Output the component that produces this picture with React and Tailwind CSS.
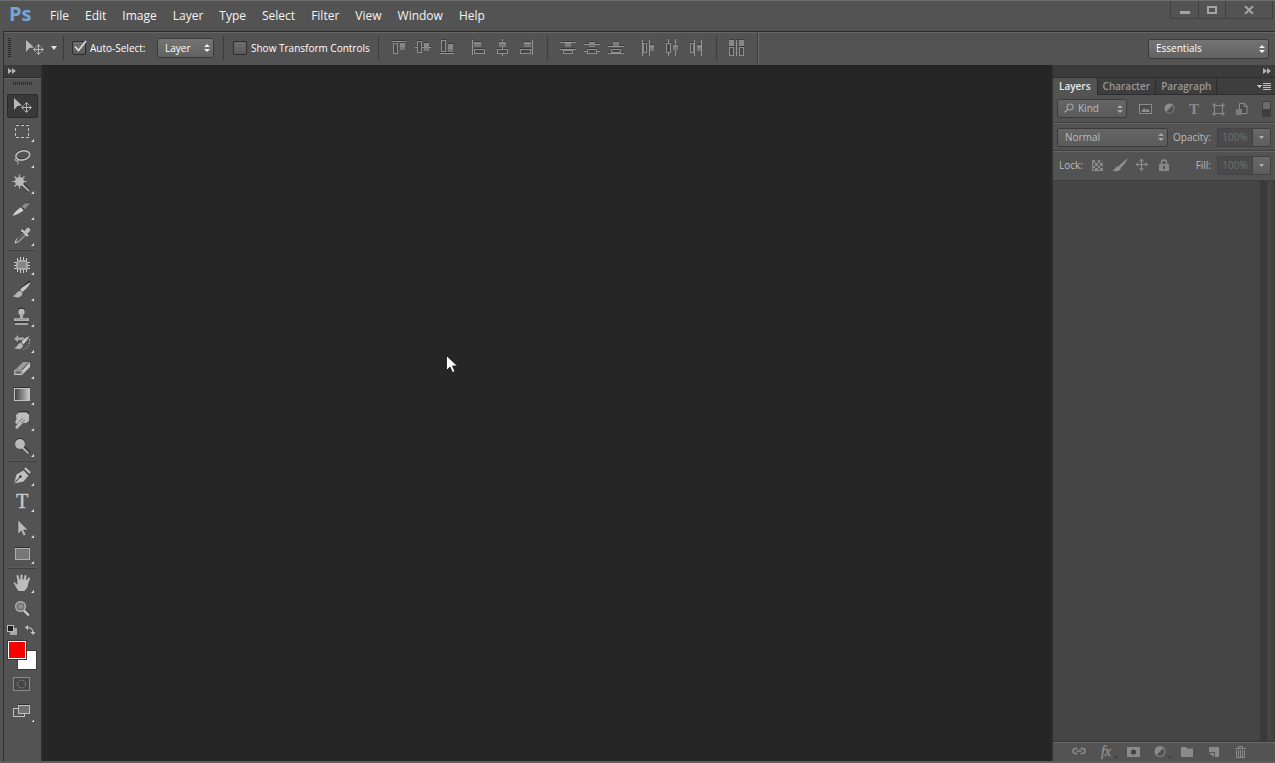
import React, { useState } from 'react';

const menuItems = ['File', 'Edit', 'Image', 'Layer', 'Type', 'Select', 'Filter', 'View', 'Window', 'Help'];

// Align / distribute glyphs on a 24px grid: bars, solid boxes and outlined boxes as [x, y, w, h]
const alignGroups = [
    [
        { name: 'Align top edges', bars: [[5, 5, 14, 1]], solid: [13, 7, 5, 7], outline: [6, 7, 5, 11] },
        { name: 'Align vertical centers', bars: [[4, 11, 16, 1]], solid: [13, 7, 5, 8], outline: [6, 5, 5, 12] },
        { name: 'Align bottom edges', bars: [[5, 17, 14, 1]], solid: [13, 8, 5, 8], outline: [6, 4, 5, 12] },
    ],
    [
        { name: 'Align left edges', bars: [[5, 4, 1, 15]], solid: [7, 6, 7, 5], outline: [7, 13, 11, 5] },
        { name: 'Align horizontal centers', bars: [[11, 3, 1, 17]], solid: [8, 6, 7, 5], outline: [6, 13, 11, 5] },
        { name: 'Align right edges', bars: [[17, 4, 1, 15]], solid: [9, 6, 7, 5], outline: [5, 13, 11, 5] },
    ],
];

const distributeGroups = [
    [
        { name: 'Distribute top edges', bars: [[4, 6, 16, 1], [4, 13, 16, 1]], solid: [9, 7, 6, 4], outline: [7, 14, 10, 4] },
        { name: 'Distribute vertical centers', bars: [[4, 8, 16, 1], [4, 15, 16, 1]], solid: [9, 6, 6, 5], outline: [7, 13, 10, 5] },
        { name: 'Distribute bottom edges', bars: [[4, 10, 16, 1], [4, 17, 16, 1]], solid: [9, 6, 6, 4], outline: [7, 13, 10, 4] },
    ],
    [
        { name: 'Distribute left edges', bars: [[6, 4, 1, 16], [13, 4, 1, 16]], solid: [14, 9, 4, 6], outline: [7, 7, 4, 10] },
        { name: 'Distribute horizontal centers', bars: [[8, 3, 1, 17], [15, 3, 1, 17]], solid: [13, 9, 5, 5], outline: [6, 7, 5, 10] },
        { name: 'Distribute right edges', bars: [[10, 4, 1, 16], [17, 4, 1, 16]], solid: [13, 9, 4, 6], outline: [6, 7, 4, 10] },
    ],
];

function AlignIcon({ item }) {
    const [sx, sy, sw, sh] = item.solid;
    const [ox, oy, ow, oh] = item.outline;
    return (
        <svg className="w-6 h-6" viewBox="0 0 24 24" shapeRendering="crispEdges">
            <rect x={sx} y={sy - 1} width={sw} height="1" fill="#3a3a3a" />
            <rect x={ox} y={oy - 1} width={ow} height="1" fill="#3a3a3a" />
            {item.bars.map(([x, y, w, h], i) => (
                <g key={i}>
                    <rect x={x} y={y - 1} width={w} height={1} fill="#3a3a3a" />
                    <rect x={x} y={y} width={w} height={h} fill="#959595" />
                </g>
            ))}
            <rect x={sx} y={sy} width={sw} height={sh} fill="#888888" />
            <rect x={sx} y={sy + sh - 3} width={sw} height="3" fill="#777777" />
            <rect x={ox + 0.5} y={oy + 0.5} width={ow - 1} height={oh - 1} fill="#484848" stroke="#8c8c8c" />
        </svg>
    );
}

function AlignGroup({ items }) {
    return (
        <div className="flex">
            {items.map((item) => (
                <button key={item.name} aria-label={item.name} className="w-6 h-6">
                    <AlignIcon item={item} />
                </button>
            ))}
        </div>
    );
}

const moveGlyph = (
    <>
        <path d="M7 5v12l3.400-4 4.600-.6z" fill="#b8b8b8" />
        <path d="M19.500 10v9M15 14.500h9" stroke="#b8b8b8" fill="none" />
        <path d="M17.500 11.800l2-2.300 2 2.300M17.500 17.200l2 2.300 2-2.300M16.800 12.500l-2.300 2 2.300 2M22.200 12.500l2.300 2-2.300 2" stroke="#b8b8b8" fill="none" />
    </>
);

const toolGroups = [
    [
        { name: 'Move', glyph: moveGlyph, noFlyout: true },
        {
            name: 'Rectangular Marquee',
            glyph: (
                <g shapeRendering="crispEdges" fill="none" strokeDasharray="3 2">
                    <path d="M8 5.500h14" stroke="#3a3a3a" />
                    <rect x="8.500" y="6.500" width="13" height="12" stroke="#c4c4c4" />
                </g>
            ),
        },
        {
            name: 'Lasso',
            glyph: (
                <g fill="none">
                    <ellipse cx="15.800" cy="9.400" rx="7" ry="4.500" stroke="#303030" transform="rotate(-12 15.800 9.400)" />
                    <ellipse cx="15.800" cy="10.400" rx="7" ry="4.500" stroke="#c4c4c4" strokeWidth="1.400" transform="rotate(-12 15.800 10.400)" />
                    <path d="M10 13c-2.500 .5-2.500 3 0 3s2-2.500 .3-2M10 16c1 1 1.500 2 .5 3.500" stroke="#c4c4c4" />
                </g>
            ),
        },
        {
            name: 'Magic Wand',
            glyph: (
                <>
                    <path d="M14 12l8 8" stroke="#303030" strokeWidth="4" />
                    <path d="M14 12.500l8 7.500" stroke="#a8a8a8" strokeWidth="2.200" />
                    <path d="M12.500 3.500v14M5.500 10.500h14M7.500 5.500l10 10M17.500 5.500l-10 10" stroke="#b8b8b8" strokeWidth="1.200" />
                    <circle cx="12.500" cy="10.500" r="4.500" fill="#b8b8b8" />
                </>
            ),
        },
        {
            name: 'Slice',
            glyph: (
                <>
                    <path d="M5.500 19c2-4 5-6.500 8.500-9l2.500 3.500c-3 2-6 4-11 5.500z" fill="#cfcfcf" />
                    <path d="M14 9.500l4-3.500h6l-6.500 7z" fill="#8a8a8a" stroke="#303030" strokeWidth=".5" />
                    <path d="M14 9.500l3.500 3.500" stroke="#2b2b2b" />
                </>
            ),
        },
        {
            name: 'Eyedropper',
            glyph: (
                <>
                    <path d="M8 20l1.500-4 7-7 2.500 2.500-7 7z" fill="#5a5a5a" stroke="#cccccc" />
                    <path d="M14.500 7l6.500 6" stroke="#d0d0d0" strokeWidth="2" />
                    <path d="M16.500 9.500l3-4q2.500-1.500 3.500.5t-1 3l-3.500 3z" fill="#bdbdbd" />
                    <path d="M10 15.500l6-6.500" stroke="#2b2b2b" />
                </>
            ),
        },
    ],
    [
        {
            name: 'Spot Healing Brush',
            glyph: (
                <>
                    <path d="M10.500 6v3M13.500 5v3M16.500 5v3M19.500 6v3M10.500 17v3M13.500 18v3M16.500 18v3M19.500 17v3M7 10.500h3M7 13.500h3M7 16h3M20 10.500h3M20 13.500h3M20 16h3" stroke="#cccccc" shapeRendering="crispEdges" />
                    <rect x="9" y="8" width="12" height="10" rx="4" fill="#a8a8a8" />
                    <rect x="11" y="10" width="8" height="6" fill="#868686" />
                </>
            ),
        },
        {
            name: 'Brush',
            glyph: (
                <>
                    <path d="M23.500 3.500l-9.500 8" stroke="#303030" strokeWidth="3" />
                    <path d="M24 4c-3 5-6 8-8.500 10l-2.500-2.500C16 8.500 20 6 24 4z" fill="#c8c8c8" />
                    <path d="M13 13c1.500 0 3 2 2 4-1.500 3-6 3-9.500 1 3.500 0 3.500-4.500 7.500-5z" fill="#b5b5b5" />
                </>
            ),
        },
        {
            name: 'Clone Stamp',
            glyph: (
                <>
                    <circle cx="14.500" cy="7" r="3.500" fill="#303030" />
                    <circle cx="14.500" cy="8" r="3.200" fill="#bcbcbc" />
                    <path d="M13 9h3v5h6v3H7v-3h6z" fill="#b0b0b0" />
                    <path d="M8 15h13" stroke="#8c8c8c" />
                    <path d="M7 18h15" stroke="#303030" />
                    <path d="M8 20h13" stroke="#c0c0c0" strokeWidth="1.500" />
                </>
            ),
        },
        {
            name: 'History Brush',
            glyph: (
                <>
                    <path d="M7 9l4-4v2.500h6V10h-6v2z" fill="#a8a8a8" />
                    <path d="M23 5.500c-2 4-4 7-6.500 9L14 12c2-3 5-5 9-6.500z" fill="#c8c8c8" stroke="#303030" strokeWidth=".5" />
                    <path d="M13.500 13c2 0 3 2 2 4-1.500 2.500-5 2.500-8.500 1 3 0 3-4 6.500-5z" fill="#b5b5b5" />
                    <path d="M22.500 9q.5 8-6 10.500" stroke="#c8c8c8" strokeDasharray="1.500 1.500" fill="none" />
                </>
            ),
        },
        {
            name: 'Eraser',
            glyph: (
                <>
                    <path d="M16 5.500h7l-8 8H8z" fill="#9c9c9c" stroke="#303030" strokeWidth=".6" />
                    <path d="M8 14h7v4.500H7.500z" fill="#707070" stroke="#c8c8c8" />
                    <path d="M15.500 14l7.500-8v5l-7.500 7.500z" fill="#c6c6c6" />
                </>
            ),
        },
        {
            name: 'Gradient',
            glyph: (
                <g shapeRendering="crispEdges">
                    <defs>
                        <linearGradient id="toolGradient">
                            <stop offset="0" stopColor="#3c3c3c" />
                            <stop offset="1" stopColor="#cccccc" />
                        </linearGradient>
                    </defs>
                    <rect x="7" y="5" width="16" height="1" fill="#303030" />
                    <rect x="7.500" y="6.500" width="15" height="12" fill="url(#toolGradient)" stroke="#c0c0c0" />
                </g>
            ),
        },
        {
            name: 'Smudge',
            glyph: (
                <>
                    <path d="M11 4l4-.5h6.500v3" fill="none" stroke="#303030" />
                    <path d="M9 7l3-2.500h7l3 2v6L19.500 15h-3.500l-6 6-2-1.500 3.500-5-2 1.500-1.500-1.500 1.500-3z" fill="#bcbcbc" />
                    <path d="M11.500 14l4.500-4M14 15l4-3" stroke="#707070" />
                </>
            ),
        },
        {
            name: 'Dodge',
            glyph: (
                <>
                    <path d="M16 13l6 6.500" stroke="#303030" strokeWidth="3.500" />
                    <path d="M15.500 13.500l6 6" stroke="#b0b0b0" strokeWidth="2" />
                    <circle cx="13" cy="9" r="5" fill="#303030" />
                    <circle cx="13" cy="10" r="5" fill="#b8b8b8" />
                </>
            ),
        },
    ],
    [
        {
            name: 'Pen',
            glyph: (
                <>
                    <path d="M7 20.500l2.500-9 7-4 5 5-5 6z" fill="#c0c0c0" />
                    <path d="M7.500 20l5.500-6" stroke="#303030" />
                    <circle cx="13.500" cy="13.500" r="1.200" fill="#303030" />
                    <path d="M16.500 6l2-2.500 6 5.500-2 2.500z" fill="#b8b8b8" stroke="#303030" strokeWidth=".8" />
                </>
            ),
        },
        {
            name: 'Horizontal Type',
            glyph: (
                <text x="15" y="19" textAnchor="middle" fontSize="20" fontFamily="Liberation Serif, serif" fill="#c8c8c8" stroke="#c8c8c8" strokeWidth=".4">T</text>
            ),
        },
        {
            name: 'Path Selection',
            glyph: <path d="M11 5v14l3.200-3 2.300 5 2.500-1.200-2.300-4.800H21z" fill="#b8b8b8" stroke="#404040" strokeWidth=".5" />,
        },
        {
            name: 'Rectangle',
            glyph: (
                <g shapeRendering="crispEdges">
                    <rect x="8" y="6" width="15" height="1" fill="#303030" />
                    <rect x="8.500" y="7.500" width="14" height="11" fill="#777777" stroke="#b0b0b0" />
                </g>
            ),
        },
    ],
    [
        {
            name: 'Hand',
            glyph: (
                <>
                    <path d="M12 12l-1.500-6M14.500 11V5.500M17.500 11l1-5M20 13l2-4.500" stroke="#c0c0c0" strokeWidth="2" strokeLinecap="round" />
                    <path d="M7 12.500l4 3V10h8.500l1.500 2-1 5-2.500 3.500h-6L10 18z" fill="#bcbcbc" stroke="#bcbcbc" strokeLinejoin="round" />
                </>
            ),
        },
        {
            name: 'Zoom',
            noFlyout: true,
            glyph: (
                <>
                    <path d="M17 14l5.500 5.500" stroke="#303030" strokeWidth="4" />
                    <path d="M17 14.500l5 5" stroke="#c0c0c0" strokeWidth="2.600" />
                    <circle cx="13.500" cy="10.500" r="4.800" fill="#707070" stroke="#b0b0b0" strokeWidth="1.500" />
                    <circle cx="13.500" cy="10.500" r="2.500" fill="#8e8e8e" />
                </>
            ),
        },
    ],
];

function Toolbar() {
    const [activeTool, setActiveTool] = useState('Move');

    return (
        <aside className="w-10 shrink-0 flex flex-col border-l border-r-2 border-[#2d2d2d] bg-[#535353]">
            <button aria-label="Expand tools" className="h-[13px] shrink-0 flex items-center bg-[#3b3b3b] border-b border-[#2d2d2d] pl-1">
                <DoubleArrow />
            </button>
            <div className="h-[15px] shrink-0 border-t border-[#666666] flex justify-center pt-[3px]">
                <svg className="w-5 h-1" viewBox="0 0 20 4" shapeRendering="crispEdges">
                    <path d="M0 1.500h20" stroke="#2b2b2b" strokeWidth="3" strokeDasharray="1 1" />
                </svg>
            </div>
            {toolGroups.map((group, i) => (
                <div key={i} className="flex flex-col items-center">
                    {i > 0 && <div className="h-[3px] w-[29px] border-t border-[#5a5a5a] bg-[#404040] bg-clip-content pb-px" />}
                    {group.map((tool) => (
                        <button
                            key={tool.name}
                            aria-label={tool.name}
                            onClick={() => setActiveTool(tool.name)}
                            className="h-[26px] w-[31px] flex items-center justify-center"
                        >
                            <span className={activeTool === tool.name
                                ? 'block w-[31px] h-6 rounded-xs bg-[#393939] outline -outline-offset-1 outline-[#2b2b2b]'
                                : 'block w-[31px] h-6'}
                            >
                                <svg className="w-[31px] h-6 overflow-visible" viewBox="0 1 31 24" fill="none">
                                    {tool.glyph}
                                    {!tool.noFlyout && <path d="M27 20v3h-3z" fill="#dddddd" />}
                                </svg>
                            </span>
                        </button>
                    ))}
                </div>
            ))}

            {/* Foreground / background colors */}
            <div className="flex justify-between pl-[2px] pr-[5px] pt-[2px]">
                <button aria-label="Default colors" className="w-3 h-3">
                    <svg viewBox="0 0 12 12" shapeRendering="crispEdges">
                        <rect x="4" y="4" width="7" height="7" fill="#aaaaaa" />
                        <rect x="1.500" y="1.500" width="6" height="6" fill="#202020" stroke="#bbbbbb" />
                    </svg>
                </button>
                <button aria-label="Swap colors" className="w-3 h-3">
                    <svg viewBox="0 0 12 12" fill="none">
                        <path d="M3 3.500q6 0 6 5" stroke="#c4c4c4" strokeWidth="1.200" />
                        <path d="M4 1v5L1 3.500zM6.500 8h5L9 11z" fill="#c4c4c4" />
                    </svg>
                </button>
            </div>
            <div className="grid grid-cols-3 grid-rows-3 w-[30px] h-[30px] ml-[3px] mt-1">
                <button aria-label="Background color" className="col-start-2 col-end-4 row-start-2 row-end-4 border border-[#3a3a3a] bg-white" />
                <button aria-label="Foreground color" className="col-start-1 col-end-3 row-start-1 row-end-3 z-10 border border-[#3a3a3a] bg-white p-px">
                    <span className="block w-full h-full bg-[#f80000]" />
                </button>
            </div>
            <button aria-label="Edit in Quick Mask mode" className="mt-[7px] ml-[9px] w-[17px] h-[14px]">
                <svg viewBox="0 0 17 14">
                    <rect x=".5" y=".5" width="16" height="13" fill="#474747" stroke="#8c8c8c" />
                    <circle cx="8.500" cy="7" r="4" fill="none" stroke="#aaaaaa" strokeDasharray="1.200 1.300" />
                </svg>
            </button>
            <button aria-label="Change screen mode" className="mt-3 ml-[9px] w-[22px] h-5">
                <svg viewBox="0 0 22 20" shapeRendering="crispEdges">
                    <rect x=".5" y="5.500" width="11" height="8" fill="#555555" stroke="#c0c0c0" />
                    <rect x="5" y="1" width="12" height="1" fill="#303030" />
                    <rect x="5.500" y="2.500" width="11" height="8" fill="#707070" stroke="#c0c0c0" />
                    <path d="M21 16v3h-3z" fill="#dddddd" />
                </svg>
            </button>
        </aside>
    );
}

function DoubleArrow() {
    return (
        <svg className="w-2 h-[6px]" viewBox="0 0 8 6">
            <path d="M0 0l4 3-4 3zM4 0l4 3-4 3z" fill="#b4b4b4" />
        </svg>
    );
}

function SelectBox({ label, options, className, padding = 'px-[7px]', arrow = '#c8c8c8', children }) {
    return (
        <div className={'relative ' + className}>
            {children}
            <select
                aria-label={label}
                className={'appearance-none block w-full h-full rounded-xs border border-[#3a3a3a] bg-transparent outline-none ' + padding}
            >
                {options.map((o) => <option key={o}>{o}</option>)}
            </select>
            <svg className="absolute right-1 top-1/2 -translate-y-1/2 w-[6px] h-2 pointer-events-none" viewBox="0 0 6 8">
                <path d="M0 3l3-3 3 3zM0 5l3 3 3-3z" fill={arrow} />
            </svg>
        </div>
    );
}

function CheckBox({ label, defaultChecked, className }) {
    return (
        <label className={'flex items-center gap-1 whitespace-nowrap ' + className}>
            <span className="relative w-[14px] h-[14px] shrink-0">
                <input
                    type="checkbox"
                    defaultChecked={defaultChecked}
                    className="peer appearance-none block w-full h-full rounded-xs border border-[#2c2c2c] bg-linear-to-b from-[#707070] to-[#5a5a5a]"
                />
                <svg className="absolute -top-px left-px hidden peer-checked:block w-[14px] h-[14px] pointer-events-none" viewBox="0 0 14 14">
                    <path d="M2 6.500l3.500 4L13 1" fill="none" stroke="#e0e0e0" strokeWidth="1.700" />
                </svg>
            </span>
            {label}
        </label>
    );
}

function Divider() {
    return <div className="w-px h-6 shrink-0 bg-[#3c3c3c]" />;
}

function OptionsBar() {
    return (
        <div className="h-[34px] shrink-0 flex items-center border-t border-l border-t-[#2b2b2b] border-l-[#2d2d2d] ml-[3px] pb-px text-[10px] text-white shadow-[inset_0_1px_0_#666666]">
            <svg className="ml-1 w-[3px] h-5" viewBox="0 0 3 20" shapeRendering="crispEdges">
                <path d="M1.500 0v20" stroke="#2b2b2b" strokeWidth="3" strokeDasharray="1 1" />
            </svg>
            <button aria-label="Tool presets" className="flex items-center gap-[2px] ml-2 w-11">
                <svg className="w-[30px] h-[26px]" viewBox="0 0 30 26" fill="none">{moveGlyph}</svg>
                <svg className="w-[6px] h-1" viewBox="0 0 6 4"><path d="M0 0h6L3 4z" fill="#e0e0e0" /></svg>
            </button>
            <Divider />
            <CheckBox label="Auto-Select:" defaultChecked className="ml-2 w-[85px]" />
            <SelectBox
                label="Auto-select target"
                options={['Layer', 'Group']}
                className="w-[57px] h-5 rounded-xs bg-linear-to-b from-[#757575] to-[#616161]"
                arrow="#f0f0f0"
            />
            <div className="w-[9px]" />
            <Divider />
            <CheckBox label="Show Transform Controls" className="ml-[9px] w-[145px]" />
            <Divider />
            <div className="flex gap-2 mx-2">
                {alignGroups.map((g, i) => <AlignGroup key={i} items={g} />)}
            </div>
            <Divider />
            <div className="flex gap-2 mx-2">
                {distributeGroups.map((g, i) => <AlignGroup key={i} items={g} />)}
            </div>
            <Divider />
            <button aria-label="Auto-align layers" className="mx-2 w-6 h-6">
                <svg viewBox="0 0 24 24" shapeRendering="crispEdges">
                    <path d="M4 3.500h5M14 3.500h5M4 10.500h5M14 10.500h5M11 3.500h2" stroke="#3a3a3a" />
                    <path d="M4 4h5v6H4zM14 4h5v6h-5z" fill="#888888" />
                    <path d="M4.500 11.500h4v8h-4zM14.500 11.500h4v8h-4z" fill="#484848" stroke="#8c8c8c" />
                    <path d="M11.500 4v16" stroke="#959595" />
                </svg>
            </button>
            <div className="self-stretch w-[2px] bg-[#3c3c3c] border-r border-[#6c6c6c]" />
            <div className="grow" />
            <SelectBox
                label="Workspace"
                options={['Essentials', 'Painting', 'Photography']}
                className="w-[121px] h-5 mr-[6px] mt-px rounded-xs bg-linear-to-b from-[#757575] to-[#616161]"
                arrow="#f0f0f0"
            />
        </div>
    );
}

const filterIcons = [
    {
        name: 'Pixel layers',
        glyph: (
            <>
                <rect x="1.500" y="3.500" width="12" height="9" fill="#4a4a4a" stroke="#8c8c8c" />
                <path d="M3 11l3-4 2 2 2-1.500L12 11z" fill="#8c8c8c" />
            </>
        ),
    },
    {
        name: 'Adjustment layers',
        glyph: (
            <>
                <circle cx="7.500" cy="7.500" r="5" fill="#8c8c8c" />
                <path d="M4.500 10.500l6-6a4.200 4.200 0 0 1-6 6z" fill="#505050" />
            </>
        ),
    },
    {
        name: 'Type layers',
        glyph: <text x="8" y="13" textAnchor="middle" fontSize="15" fontWeight="bold" fontFamily="Liberation Serif, serif" fill="#8c8c8c">T</text>,
    },
    {
        name: 'Shape layers',
        glyph: (
            <>
                <path d="M4 4.500h8M4 12.500h8M4.500 4v9M12.500 4v9" fill="none" stroke="#8c8c8c" />
                <path d="M3 3h2v2H3zM12 3h2v2h-2zM3 12h2v2H3zM12 12h2v2h-2z" fill="#535353" stroke="#8c8c8c" />
            </>
        ),
    },
    {
        name: 'Smart objects',
        glyph: (
            <>
                <path d="M5.500 2.500h5l2.500 2.500v7.500H5.500z" fill="#4a4a4a" stroke="#8c8c8c" />
                <path d="M10 2v3.500h3" fill="none" stroke="#8c8c8c" />
                <path d="M2 8h6v6H2z" fill="#7c7c7c" />
            </>
        ),
    },
];

const lockIcons = [
    {
        name: 'Lock transparent pixels',
        glyph: (
            <g shapeRendering="crispEdges">
                <rect x="2" y="3" width="11" height="11" fill="#888888" />
                <path d="M5 3h3v3H5zM10 3h3v3h-3zM3 6h2v3H3zM8 6h2v3H8zM5 9h3v2H5zM10 9h3v2h-3zM3 11h2v2H3zM8 11h2v2H8z" fill="#5c5c5c" />
            </g>
        ),
    },
    {
        name: 'Lock image pixels',
        glyph: <path d="M16 1.500c-2 4-4.500 7-7 9C9 14 5 15 0 13.500c3-.5 3-4 7-4.500 2.500-3 5.500-5.500 9-7.500z" fill="#8f8f8f" />,
    },
    {
        name: 'Lock position',
        glyph: (
            <>
                <path d="M7.500 2v12M2 7.500h12" stroke="#8f8f8f" strokeWidth="1.200" />
                <path d="M5.500 4.500l2-2.500 2 2.500M5.500 11l2 2.500 2-2.500M4.500 5.500l-2.500 2 2.500 2M11 5.500l2.500 2-2.500 2" fill="none" stroke="#8f8f8f" />
            </>
        ),
    },
    {
        name: 'Lock all',
        glyph: (
            <>
                <path d="M5.500 8V5.500a2.500 2.500 0 0 1 5 0V8" fill="none" stroke="#8f8f8f" strokeWidth="1.500" />
                <rect x="3" y="7" width="10" height="7" fill="#888888" />
                <path d="M8 9v3" stroke="#404040" strokeWidth="1.500" />
            </>
        ),
    },
];

const footerIcons = [
    {
        name: 'Link layers',
        glyph: (
            <g fill="none" stroke="#8a8a8a" strokeWidth="1.500">
                <path d="M6.500 4.500H4.500a2.500 2.500 0 0 0 0 5h2M9.500 4.500h2a2.500 2.500 0 0 1 0 5h-2M5.500 7h5" />
            </g>
        ),
    },
    {
        name: 'Layer style',
        glyph: <text x="8" y="12" textAnchor="middle" fontSize="14" fontStyle="italic" fontFamily="Liberation Serif, serif" fill="#929292" stroke="#929292" strokeWidth=".3">fx</text>,
        menu: true,
    },
    {
        name: 'Layer mask',
        glyph: (
            <>
                <rect x="2" y="3" width="13" height="10" fill="#8a8a8a" />
                <circle cx="8.500" cy="8" r="2.600" fill="#444444" />
            </>
        ),
    },
    {
        name: 'Adjustment layer',
        glyph: (
            <>
                <circle cx="8" cy="7.500" r="5.500" fill="#8a8a8a" />
                <path d="M4.800 10.700l6.400-6.400a4.500 4.500 0 0 1-6.400 6.400z" fill="#505050" />
            </>
        ),
        menu: true,
    },
    {
        name: 'New group',
        glyph: <path d="M2 3h5l1 1.500h6V13H2z" fill="#8a8a8a" />,
    },
    {
        name: 'New layer',
        glyph: (
            <>
                <path d="M3 3h10v10H9V8H3z" fill="#8a8a8a" />
                <path d="M3 9h5v4z" fill="#8a8a8a" />
            </>
        ),
    },
    {
        name: 'Delete layer',
        glyph: (
            <path d="M2 4.500h11M5.500 4V2.500h4V4M3.500 6v7.500h8V6M5.500 6v7M7.500 6v7M9.500 6v7" fill="none" stroke="#8a8a8a" />
        ),
    },
];

function PercentField({ id, label }) {
    return (
        <div className="flex items-center">
            <label htmlFor={id} className="mr-[6px]">{label}</label>
            <input
                id={id}
                defaultValue="100%"
                className="w-[35px] h-[19px] border border-r-0 border-[#444444] bg-[#4a4a4a] text-center text-[#727272] outline-none"
            />
            <button
                aria-label={label + ' slider'}
                className="w-[19px] h-[19px] flex items-center justify-center border border-[#414141] bg-linear-to-b from-[#696969] to-[#5d5d5d] rounded-r-xs"
            >
                <svg className="w-[5px] h-[3px]" viewBox="0 0 5 3"><path d="M0 0h5L2.500 3z" fill="#b0b0b0" /></svg>
            </button>
        </div>
    );
}

function LayersPanel() {
    const [tab, setTab] = useState('Layers');

    return (
        <aside className="w-[224px] shrink-0 flex flex-col border-l-2 border-[#2d2d2d] bg-[#535353] text-[10px] text-[#bcbcbc]">
            <button aria-label="Collapse panels" className="h-[13px] shrink-0 flex items-center justify-end pr-1 bg-[#3b3b3b] border-b border-[#2d2d2d]">
                <DoubleArrow />
            </button>
            <div className="h-[17px] shrink-0 flex bg-[#3e3e3e] font-semibold">
                {['Layers', 'Character', 'Paragraph'].map((t) => (
                    <button
                        key={t}
                        onClick={() => setTab(t)}
                        className={tab === t
                            ? 'px-[6px] bg-[#535353] text-[#e8e8e8] border-r border-[#2d2d2d]'
                            : 'px-[5px] text-[#989898] border-r border-b border-[#2d2d2d]'}
                    >
                        {t}
                    </button>
                ))}
                <div className="grow flex items-center justify-end pr-1 border-b border-[#2d2d2d]">
                    <button aria-label="Panel menu">
                        <svg className="w-[14px] h-[9px]" viewBox="0 0 14 9" shapeRendering="crispEdges">
                            <path d="M0 3h5L2.500 6z" fill="#c0c0c0" />
                            <path d="M6 1.500h8M6 3.500h8M6 5.500h8M6 7.500h8" stroke="#c0c0c0" />
                        </svg>
                    </button>
                </div>
            </div>

            <div className="h-7 shrink-0 flex items-center pl-1 border-b border-[#404040]">
                <SelectBox
                    label="Filter kind"
                    options={['Kind', 'Name', 'Effect']}
                    className="w-[70px] h-[19px] rounded-xs bg-linear-to-b from-[#666666] to-[#5a5a5a]"
                    padding="pl-5"
                    arrow="#a8a8a8"
                >
                    <svg className="absolute left-[7px] top-1 w-[10px] h-[10px] pointer-events-none" viewBox="0 0 10 10" fill="none" stroke="#a0a0a0">
                        <circle cx="6" cy="4" r="3" strokeWidth="1.200" />
                        <path d="M3.800 6.200L.5 9.500" strokeWidth="1.300" />
                    </svg>
                </SelectBox>
                <div className="flex gap-2 ml-[11px]">
                    {filterIcons.map((icon) => (
                        <button key={icon.name} aria-label={icon.name} className="w-4 h-4">
                            <svg viewBox="0 0 16 16">{icon.glyph}</svg>
                        </button>
                    ))}
                </div>
                <button aria-label="Toggle filtering" className="flex items-start ml-3 w-[9px] h-4 bg-[#3e3e3e] p-px">
                    <span className="w-full h-[7px] bg-[#6c6c6c]" />
                </button>
            </div>

            <div className="h-7 shrink-0 flex items-center justify-between pl-1 pr-1 border-t border-b border-t-[#666666] border-b-[#404040]">
                <SelectBox
                    label="Blend mode"
                    options={['Normal', 'Multiply', 'Screen']}
                    className="w-[111px] h-[19px] rounded-xs bg-linear-to-b from-[#666666] to-[#5a5a5a]"
                    arrow="#a8a8a8"
                />
                <PercentField id="opacity" label="Opacity:" />
            </div>

            <div className="h-[30px] shrink-0 flex items-center justify-between pl-[6px] pr-1 pb-[2px] border-t border-b border-t-[#666666] border-b-[#3c3c3c]">
                <div className="flex items-center">
                    <span className="w-[31px]">Lock:</span>
                    <div className="flex gap-[6px]">
                        {lockIcons.map((icon) => (
                            <button key={icon.name} aria-label={icon.name} className="w-4 h-4">
                                <svg viewBox="0 0 16 16">{icon.glyph}</svg>
                            </button>
                        ))}
                    </div>
                </div>
                <PercentField id="fill" label="Fill:" />
            </div>

            {/* Empty layer list with its scroll track */}
            <div className="grow flex justify-end bg-[#454545]">
                <div className="w-[7px] bg-[#3a3a3a]" />
                <div className="w-2 border-r-2 border-[#3e3e3e]" />
            </div>

            <div className="h-5 shrink-0 flex items-center gap-[11px] pl-[18px] border-t border-[#383838] shadow-[inset_0_1px_0_#6a6a6a]">
                {footerIcons.map((icon) => (
                    <button key={icon.name} aria-label={icon.name} className="w-4 h-4">
                        <svg className="overflow-visible" viewBox="0 0 16 16">
                            {icon.glyph}
                            {icon.menu && <path d="M16 12.500h4l-2 2z" fill="#3a3a3a" />}
                        </svg>
                    </button>
                ))}
            </div>
        </aside>
    );
}

function TitleBar() {
    return (
        <header className="h-[31px] shrink-0 flex items-start border-t border-[#6c6c6c]">
            <div className="w-[42px] pl-[9px] text-[20px] leading-[26px] font-bold text-[#73a5d8]">Ps</div>
            <nav className="grow flex h-full items-center gap-4 pl-2 text-xs text-[#f4f4f4]">
                {menuItems.map((m) => (
                    <button key={m}>{m}</button>
                ))}
            </nav>
            <div className="flex h-[18px] mr-[2px] border border-t-0 border-[#404040] rounded-b-xs divide-x divide-[#404040]">
                <button aria-label="Minimize" className="w-7 flex items-center justify-center">
                    <span className="w-[10px] h-[3px] mt-[5px] bg-[#a4a4a4]" />
                </button>
                <button aria-label="Maximize" className="w-[27px] flex items-center justify-center">
                    <span className="w-[10px] h-2 border-2 border-[#a4a4a4]" />
                </button>
                <button aria-label="Close" className="w-[46px] flex items-center justify-center">
                    <svg className="w-[10px] h-2" viewBox="0 0 10 8">
                        <path d="M1 0l8 8M9 0L1 8" stroke="#a4a4a4" strokeWidth="2" />
                    </svg>
                </button>
            </div>
        </header>
    );
}

function App() {
    return (
        <div className="h-screen flex flex-col overflow-hidden bg-[#535353] font-['Open_Sans',sans-serif]">
            <TitleBar />
            <OptionsBar />
            <div className="grow min-h-0 flex pl-[3px] border-b-2 border-[#5e5e5e]">
                <Toolbar />
                <main className="grow relative bg-[#262626] border-t border-[#222222]">
                    {/* Pointer */}
                    <svg className="absolute left-[40%] top-[289px] w-3 h-[18px]" viewBox="0 0 12 18">
                        <path d="M.5 .5v15l3.500-3.500 2.500 5.500 2.500-1-2.500-5.500h5z" fill="#ffffff" stroke="#111111" strokeWidth=".8" />
                    </svg>
                </main>
                <LayersPanel />
            </div>
        </div>
    );
}

export default App;
